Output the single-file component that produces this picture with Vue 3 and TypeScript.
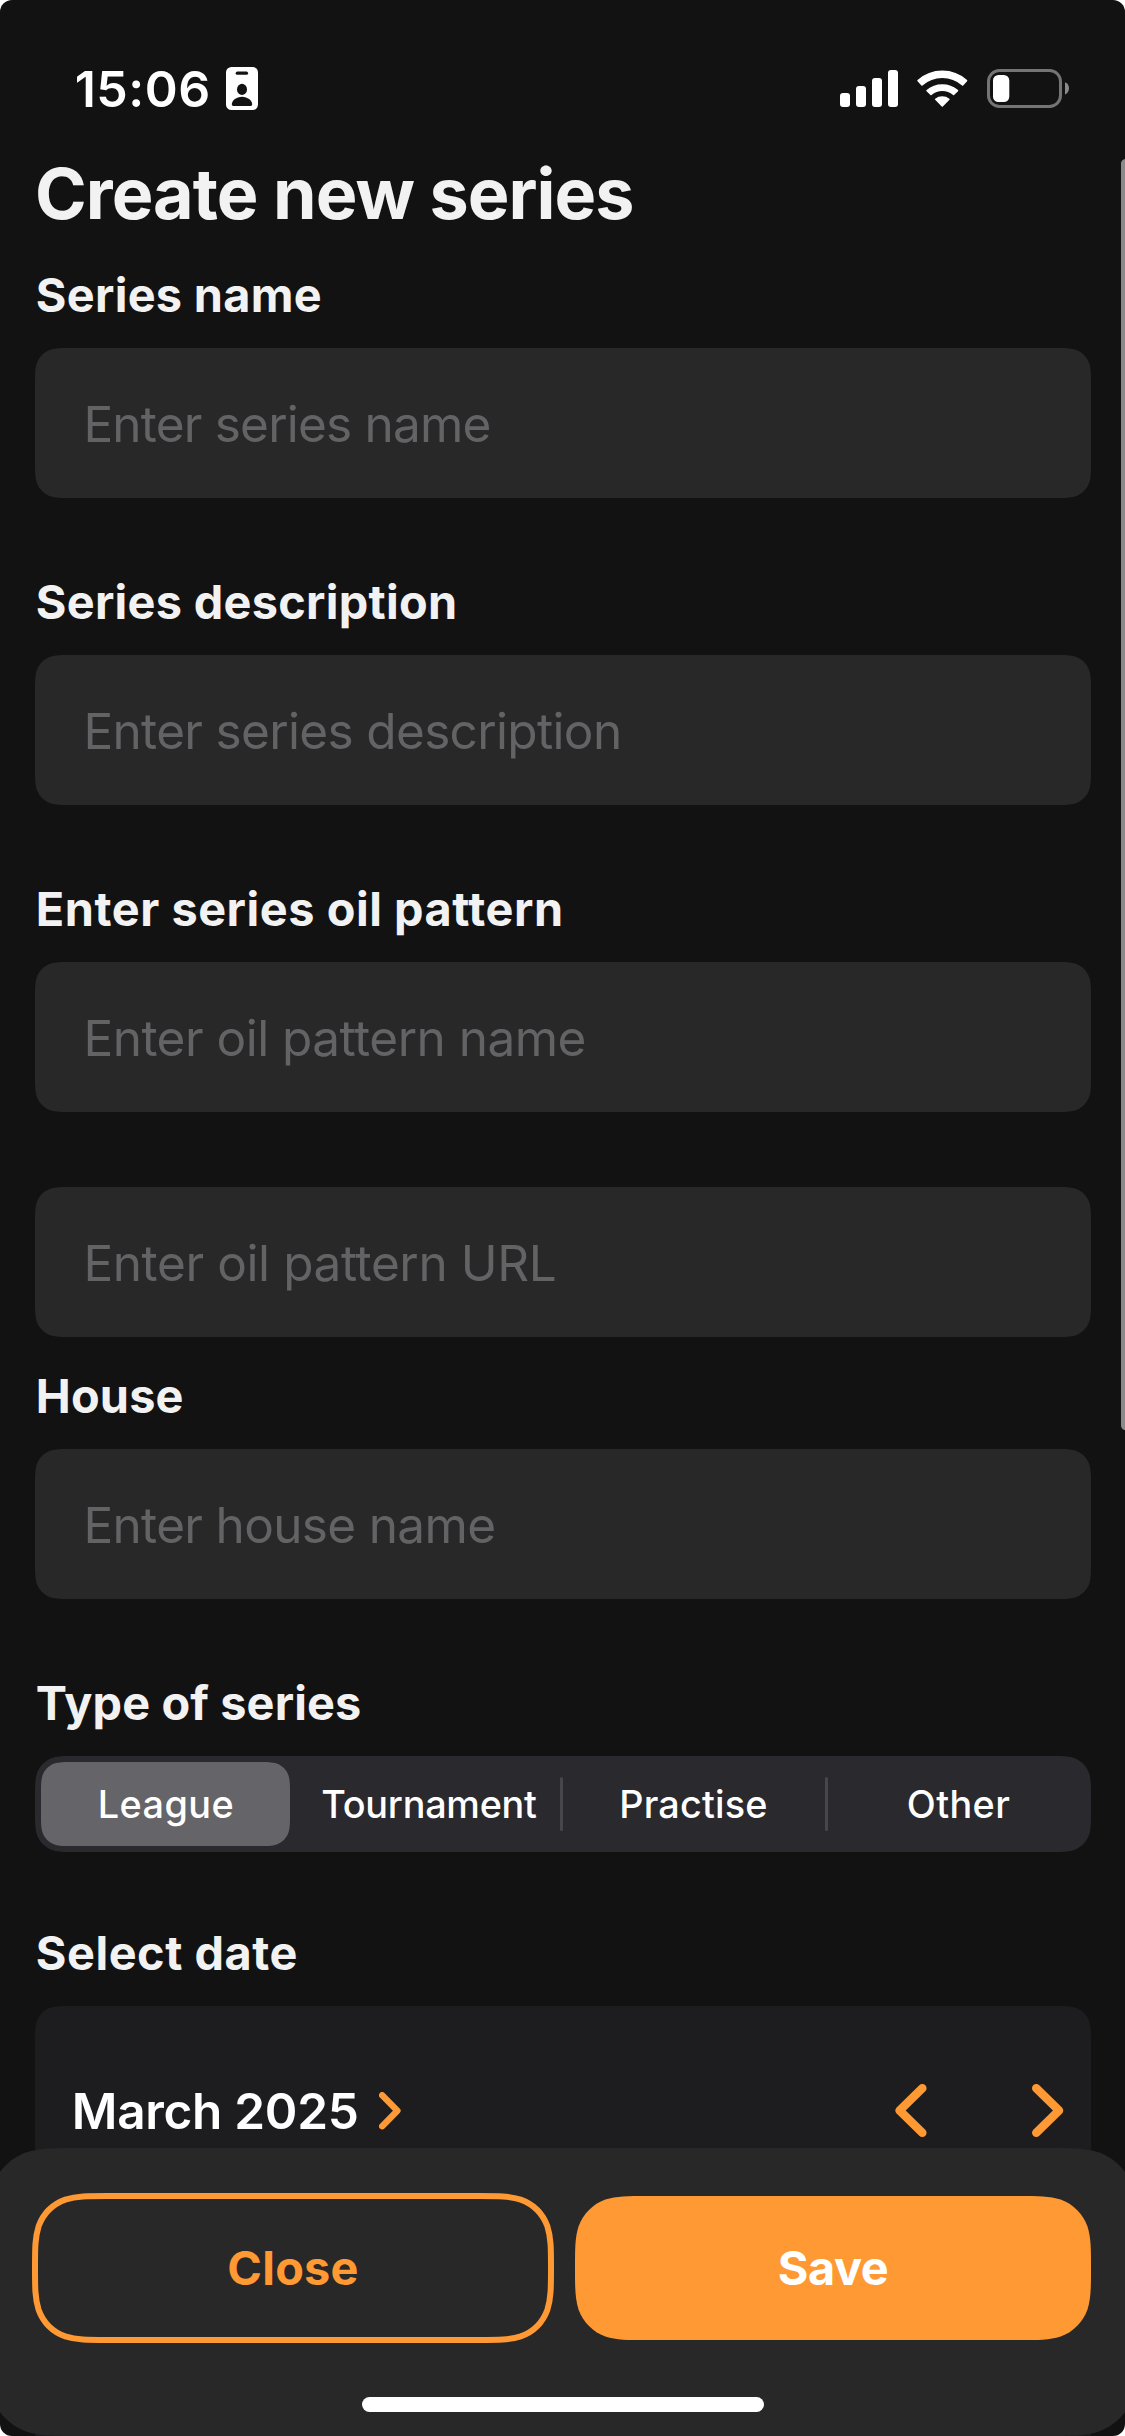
<script setup lang="ts">
import { ref } from 'vue'

interface TextInput {
  placeholder: string
  spacing: number
}

interface Field {
  label?: string
  spacing?: number
  tight?: boolean
  input: TextInput
}

const fields: Field[] = [
  { label: 'Series name', spacing: 0.32, input: { placeholder: 'Enter series name', spacing: -0.795 } },
  { label: 'Series description', spacing: 0.3, input: { placeholder: 'Enter series description', spacing: -0.655 } },
  { label: 'Enter series oil pattern', spacing: 0.56, input: { placeholder: 'Enter oil pattern name', spacing: -0.506 } },
  { input: { placeholder: 'Enter oil pattern URL', spacing: -0.391 } },
  { label: 'House', spacing: 0.2, tight: true, input: { placeholder: 'Enter house name', spacing: -0.657 } },
]

const segments = [
  { name: 'League', spacing: 0.43 },
  { name: 'Tournament', spacing: -0.25 },
  { name: 'Practise', spacing: 0.2 },
  { name: 'Other', spacing: 0.4 },
]
const selected = ref('League')

/** Rounded rectangle with continuous-curvature corners. */
function squircle(w: number, h: number, r: number, x = 0, y = 0): string {
  const far = Math.min(1.5287 * r, h / 2)
  const c1 = Math.min(1.0885 * r, far * 0.85)
  const [c2, p, q, m, n] = [0.8684, 0.6315, 0.0749, 0.3728, 0.1691].map((k) => k * r)
  const R = x + w
  const B = y + h
  return [
    `M${x + far} ${y}H${R - far}`,
    `C${R - c1} ${y} ${R - c2} ${y} ${R - p} ${y + q}`,
    `C${R - m} ${y + n} ${R - n} ${y + m} ${R - q} ${y + p}`,
    `C${R} ${y + c2} ${R} ${y + c1} ${R} ${y + far}`,
    `V${B - far}`,
    `C${R} ${B - c1} ${R} ${B - c2} ${R - q} ${B - p}`,
    `C${R - n} ${B - m} ${R - m} ${B - n} ${R - p} ${B - q}`,
    `C${R - c2} ${B} ${R - c1} ${B} ${R - far} ${B}`,
    `H${x + far}`,
    `C${x + c1} ${B} ${x + c2} ${B} ${x + p} ${B - q}`,
    `C${x + m} ${B - n} ${x + n} ${B - m} ${x + q} ${B - p}`,
    `C${x} ${B - c2} ${x} ${B - c1} ${x} ${B - far}`,
    `V${y + far}`,
    `C${x} ${y + c1} ${x} ${y + c2} ${x + q} ${y + p}`,
    `C${x + n} ${y + m} ${x + m} ${y + n} ${x + p} ${y + q}`,
    `C${x + c2} ${y} ${x + c1} ${y} ${x + far} ${y}Z`,
  ].join('')
}
</script>

<template>
  <div class="screen">
    <header class="status">
      <div class="status-left">
        <span class="time">15:06</span>
        <svg class="badge" width="32" height="43" viewBox="0 0 32 43">
          <rect width="32" height="43" rx="5.5" fill="#fff" />
          <rect x="9.7" y="4.6" width="12.4" height="3.2" rx="1.6" fill="#121212" />
          <ellipse cx="16" cy="22.4" rx="5" ry="5.6" fill="#121212" />
          <path
            d="M16 29.7C10.5 29.7 5.8 33.4 5.8 37.3C5.8 38.4 6.4 38.9 7.4 38.9H24.6C25.6 38.9 26.2 38.4 26.2 37.3C26.2 33.4 21.5 29.7 16 29.7Z"
            fill="#121212"
          />
        </svg>
      </div>
      <svg class="indicators" width="229" height="40" viewBox="840 69 229 40">
        <g fill="#fff">
          <rect x="840" y="93" width="10" height="14" rx="3" />
          <rect x="856" y="86" width="10" height="21" rx="3" />
          <rect x="872" y="78" width="10" height="29" rx="3" />
          <rect x="888" y="70" width="10" height="37" rx="3" />
          <g stroke="#fff" stroke-width="1.6" stroke-linejoin="round">
            <path d="M918.1 80.6A36.1 36.1 0 0 1 966.5 80.6L962.6 84.9A30.6 30.6 0 0 0 922 84.9Z" />
            <path d="M927.1 90.6A23.4 23.4 0 0 1 957.5 90.6L953.6 94.3A17.8 17.8 0 0 0 931 94.3Z" />
            <path d="M935.7 99.3A10.8 10.8 0 0 1 948.9 99.3L942.3 106Z" />
          </g>
          <rect x="993" y="75" width="16.3" height="27" rx="5.5" />
        </g>
        <rect x="988.5" y="70.5" width="72" height="36" rx="11" fill="none" stroke="#747474" stroke-width="3" />
        <path d="M1065 82.3C1067.6 83.2 1069 85.6 1069 88.3S1067.6 93.6 1065 94.5Z" fill="#8a8a8a" />
      </svg>
    </header>

    <main class="content">
      <h1 class="title">Create new series</h1>

      <section v-for="(f, i) in fields" :key="i" class="field" :class="{ tight: f.tight, unlabelled: !f.label }">
        <h2 v-if="f.label" class="label" :style="{ letterSpacing: f.spacing + 'px' }">{{ f.label }}</h2>
        <div class="input" role="textbox">
          <svg class="shape" width="1056" height="150"><path :d="squircle(1056, 150, 24)" fill="#282828" /></svg>
          <span class="placeholder" :style="{ letterSpacing: f.input.spacing + 'px' }">{{ f.input.placeholder }}</span>
        </div>
      </section>

      <section class="field">
        <h2 class="label type-label">Type of series</h2>
        <div class="segmented">
          <svg class="shape" width="1056" height="96"><path :d="squircle(1056, 96, 27)" fill="#2a292e" /></svg>
          <div
            v-for="(s, i) in segments"
            :key="s.name"
            class="segment"
            :class="{ divided: i > 1 }"
            :style="{ letterSpacing: s.spacing + 'px' }"
            @click="selected = s.name"
          >
            <svg v-if="s.name === selected" class="pill" width="249" height="84">
              <path :d="squircle(249, 84, 21)" fill="#656469" />
            </svg>
            <span class="segment-text">{{ s.name }}</span>
          </div>
        </div>
      </section>

      <section class="field date-field">
        <h2 class="label date-label">Select date</h2>
        <div class="calendar">
          <svg class="shape" width="1056" height="600"><path :d="squircle(1056, 600, 24)" fill="#1d1d1f" /></svg>
          <div class="calendar-head">
            <span class="month">March 2025</span>
            <svg class="expand" width="22" height="38" viewBox="0 0 22 38">
              <path d="M3.2 3.2L18.4 18.7L3.2 34.2" />
            </svg>
            <svg class="prev" width="32" height="53" viewBox="0 0 32 53">
              <path d="M27.3 4.3L4.6 26.5L27.3 48.7" />
            </svg>
            <svg class="next" width="32" height="53" viewBox="0 0 32 53">
              <path d="M4.3 4.3L27 26.5L4.3 48.7" />
            </svg>
          </div>
        </div>
      </section>
    </main>

    <div class="scrollbar"></div>

    <footer class="panel">
      <svg class="shape" width="1125" height="288"><path :d="squircle(1149, 288, 60, -12)" fill="#282828" /></svg>
      <div class="actions">
        <button class="button close" type="button">
          <svg class="shape" width="516" height="144">
            <path :d="squircle(516, 144, 48)" fill="none" stroke="#ff9933" stroke-width="6" />
          </svg>
          <span class="button-text">Close</span>
        </button>
        <button class="button save" type="button">
          <svg class="shape" width="516" height="144"><path :d="squircle(516, 144, 48)" fill="#ff9933" /></svg>
          <span class="button-text">Save</span>
        </button>
      </div>
      <div class="home"></div>
    </footer>
  </div>
</template>

<style>
html,
body {
  background: #fff;
}
</style>

<style scoped>
.screen {
  position: relative;
  display: flex;
  flex-direction: column;
  width: 1125px;
  height: 2436px;
  overflow: hidden;
  border-radius: 12px;
  background: #121212;
  color: #f2f2f2;
  font-family: Inter, 'Liberation Sans', sans-serif;
}

svg {
  display: block;
  flex: none;
}

.shape {
  position: absolute;
  top: 0;
  left: 0;
  overflow: visible;
}

.status {
  display: flex;
  justify-content: space-between;
  flex: none;
  height: 151px;
  box-sizing: border-box;
  padding: 59px 56px 0 74.7px;
}

.status-left {
  display: flex;
}

.time {
  font-size: 50px;
  font-weight: 600;
  line-height: 60px;
  letter-spacing: 0.5px;
  color: #fff;
}

.badge {
  margin: 8px 0 0 15.3px;
}

.indicators {
  margin-top: 10px;
}

.content {
  display: flex;
  flex-direction: column;
  flex: 1;
  min-height: 0;
  padding: 0 34px 0 35px;
}

.title {
  margin: 0 0 31px;
  font-size: 70px;
  font-weight: 700;
  line-height: 85px;
  letter-spacing: -0.97px;
}

.field {
  flex: none;
}

.field + .field {
  margin-top: 76px;
}

.field + .unlabelled {
  margin-top: 75px;
}

.field + .tight {
  margin-top: 31px;
}

.label {
  margin: 0 0 25px;
  padding-left: 0.8px;
  font-size: 46.8px;
  font-weight: 700;
  line-height: 56px;
  white-space: nowrap;
}

.type-label {
  letter-spacing: 0.14px;
}

.date-label {
  letter-spacing: 0.55px;
}

.input {
  position: relative;
  display: flex;
  align-items: center;
  height: 150px;
  box-sizing: border-box;
  padding: 2px 0 0 48.4px;
}

.placeholder {
  position: relative;
  font-size: 49.5px;
  line-height: 60px;
  white-space: nowrap;
  color: #636366;
}

.segmented {
  position: relative;
  display: grid;
  grid-template-columns: 262px 264px 265px 265px;
  height: 96px;
}

.segment {
  position: relative;
  display: flex;
  align-items: center;
  justify-content: center;
  font-size: 37.8px;
  font-weight: 500;
  line-height: 46px;
  color: #fff;
}

.divided::before {
  content: '';
  position: absolute;
  top: 21px;
  left: -1px;
  width: 3px;
  height: 54px;
  border-radius: 1.5px;
  background: #47464b;
}

.pill {
  position: absolute;
  top: 6px;
  left: 6px;
}

.segment-text {
  position: relative;
}

.field + .date-field {
  margin-top: 73px;
}

.calendar {
  position: relative;
  height: 430px;
}

.calendar-head {
  position: relative;
  display: flex;
  align-items: flex-start;
  padding: 75px 27px 0 36.8px;
}

.calendar-head svg {
  fill: none;
  stroke: #ff9933;
  stroke-linecap: round;
  stroke-linejoin: round;
}

.month {
  font-size: 49.5px;
  font-weight: 600;
  line-height: 60px;
  letter-spacing: -0.3px;
  color: #fff;
}

.expand {
  margin: 11px 0 0 20px;
  stroke-width: 6.4px;
}

.prev {
  margin: 3px 0 0 auto;
  stroke-width: 8.6px;
}

.next {
  margin: 3px 0 0 105px;
  stroke-width: 8.6px;
}

.scrollbar {
  position: absolute;
  top: 159px;
  right: -5px;
  width: 9px;
  height: 1271px;
  border-radius: 4.5px;
  background: #8a8a8a;
}

.panel {
  position: absolute;
  left: 0;
  bottom: 0;
  display: flex;
  flex-direction: column;
  width: 1125px;
  height: 288px;
}

.actions {
  position: relative;
  display: flex;
  gap: 24px;
  padding: 48px 34px 0 35px;
}

.button {
  position: relative;
  width: 516px;
  height: 144px;
  padding: 0;
  border: 0;
  background: none;
  font: 700 46.8px/56px Inter, 'Liberation Sans', sans-serif;
}

.button-text {
  position: relative;
}

.close {
  color: #ff9933;
  letter-spacing: 0.25px;
}

.save {
  color: #fff;
  letter-spacing: -0.4px;
}

.home {
  position: relative;
  width: 402px;
  height: 15px;
  margin: 57px 0 0 362px;
  border-radius: 7.5px;
  background: #fff;
}
</style>
